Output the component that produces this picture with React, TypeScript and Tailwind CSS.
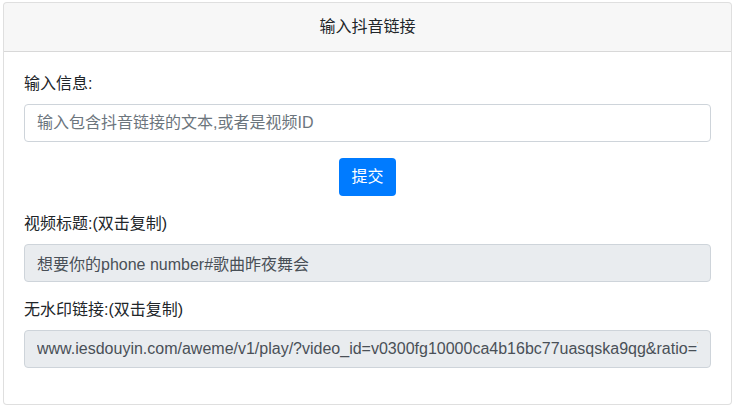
import React from 'react'

const font = { fontFamily: '"Liberation Sans", "Noto Sans CJK SC", sans-serif' }

function Field({ label, value }: { label: string; value: string }) {
  return (
    <div className="mb-4">
      <label className="mb-2 block leading-6">{label}</label>
      <input
        readOnly
        value={value}
        className="block h-[38px] w-full rounded border border-[#ced4da] bg-[#e9ecef] px-3 py-1.5 text-base leading-6 text-[#495057] outline-none"
      />
    </div>
  )
}

export default function App() {
  return (
    <div className="min-h-[411px] bg-white pt-[2px] pl-[3px] text-[#212529]" style={font}>
      <div className="w-[729px] overflow-hidden rounded border border-black/[.125] bg-white">
        <div className="border-b border-black/[.125] bg-black/[.03] px-5 py-3 text-center leading-6">
          输入抖音链接
        </div>
        <div className="p-5">
          <div className="mb-4">
            <label className="mb-2 block leading-6">输入信息:</label>
            <input
              placeholder="输入包含抖音链接的文本,或者是视频ID"
              className="block h-[38px] w-full rounded border border-[#ced4da] bg-white px-3 py-1.5 text-base leading-6 text-[#495057] outline-none placeholder:text-[#6c757d]"
            />
          </div>
          <div className="mb-4 flex justify-center">
            <button className="h-[38px] rounded bg-[#007bff] px-3 leading-6 text-white">提交</button>
          </div>
          <Field label="视频标题:(双击复制)" value="想要你的phone number#歌曲昨夜舞会" />
          <Field
            label="无水印链接:(双击复制)"
            value="www.iesdouyin.com/aweme/v1/play/?video_id=v0300fg10000ca4b16bc77uasqska9qg&ratio=720p&line=0"
          />
        </div>
      </div>
    </div>
  )
}
